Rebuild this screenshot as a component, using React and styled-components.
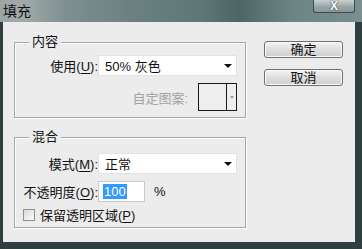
import React from "react";
import styled, { createGlobalStyle } from "styled-components";

const Global = createGlobalStyle`
  html, body { margin: 0; padding: 0; }
  body {
    width: 362px;
    height: 249px;
    overflow: hidden;
    font-family: "Liberation Sans", "Noto Sans CJK SC", sans-serif;
    font-size: 13px;
  }
`;

const Window = styled.div`
  width: 362px;
  height: 249px;
  display: flex;
  flex-direction: column;
  background: #2f3e3e;
`;

const TitleBar = styled.div`
  height: 22px;
  display: flex;
  align-items: flex-start;
  justify-content: space-between;
  background: linear-gradient(
    90deg,
    #9aa4a4 0%,
    #a2abab 6%,
    #7f9090 18%,
    #6c8282 35%,
    #5f7777 55%,
    #4c6565 66%,
    #6a8484 80%,
    #7a8f8f 100%
  );
`;

const Title = styled.span`
  padding: 2px 0 0 3px;
  font-size: 14px;
  color: #111;
  line-height: 18px;
`;

const CloseButton = styled.div`
  width: 42px;
  height: 13px;
  margin-right: 7px;
  box-sizing: border-box;
  border: 1px solid #3c4a4a;
  border-top: none;
  border-radius: 0 0 3px 3px;
  background: linear-gradient(#c9d0d0, #9aa6a6 55%, #8a9797);
  display: flex;
  align-items: center;
  justify-content: center;
  color: #fff;
  font-weight: bold;
  font-size: 12px;
  line-height: 12px;
  text-shadow: 0 0 1px #333, 0 0 1px #333;
`;

const Body = styled.div`
  flex: 1;
  margin: 0 7px 7px 3px;
  background: #ececec;
  display: flex;
  align-items: flex-start;
`;

const Groups = styled.div`
  margin: 20px 0 0 11px;
  width: 232px;
  display: flex;
  flex-direction: column;
  gap: 19px;
`;

const Group = styled.div`
  position: relative;
  box-sizing: border-box;
  height: ${(p) => p.$h}px;
  border: 1px solid #a6a6a6;
  box-shadow: inset 1px 1px 0 #fff, 1px 1px 0 #fff;
  padding: ${(p) => p.$pt}px 8px 0 0;
  display: flex;
  flex-direction: column;
  gap: 7px;
`;

const GroupTitle = styled.span`
  position: absolute;
  top: -9px;
  left: 14px;
  padding: 0 3px;
  background: #ececec;
  color: #111;
  line-height: 16px;
`;

const Row = styled.div`
  display: flex;
  align-items: center;
  justify-content: ${(p) => (p.$end ? "flex-end" : "flex-start")};
`;

const Label = styled.span`
  width: 83px;
  flex: none;
  text-align: right;
  color: #111;
  white-space: nowrap;
`;

const Key = styled.u`
  text-underline-offset: 2px;
`;

const Select = styled.div`
  flex: 1;
  height: 21px;
  box-sizing: border-box;
  background: #fff;
  border: 1px solid #e2e2e2;
  display: flex;
  align-items: center;
  justify-content: space-between;
  padding: 0 4px 0 6px;
  color: #111;
`;

const Arrow = styled.span`
  width: 0;
  height: 0;
  border-left: 4px solid transparent;
  border-right: 4px solid transparent;
  border-top: 4px solid ${(p) => p.$color || "#111"};
`;

const DisabledLabel = styled.span`
  color: #a3a3a3;
  margin-right: 10px;
`;

const PatternBox = styled.div`
  width: 39px;
  height: 28px;
  box-sizing: border-box;
  border: 1px solid #1a1a1a;
  background: #eeeeee;
  display: flex;
`;

const PatternSwatch = styled.div`
  width: 27px;
  border-right: 1px solid #1a1a1a;
`;

const PatternArrow = styled.div`
  flex: 1;
  display: flex;
  align-items: center;
  justify-content: center;
  & > span {
    border-left-width: 2px;
    border-right-width: 2px;
    border-top-width: 3px;
  }
`;

const NumberInput = styled.div`
  width: 47px;
  height: 21px;
  box-sizing: border-box;
  background: #fff;
  border: 1px solid #c3cad4;
  display: flex;
  align-items: center;
  padding-left: 4px;
`;

const Selected = styled.span`
  background: #3399ff;
  color: #fff;
  line-height: 15px;
  padding: 0 1px;
`;

const Unit = styled.span`
  margin-left: 9px;
  color: #111;
`;

const CheckRow = styled.label`
  display: flex;
  align-items: center;
  gap: 5px;
  margin-left: 8px;
  margin-top: -4px;
  color: #111;
`;

const Checkbox = styled.span`
  width: 12px;
  height: 12px;
  box-sizing: border-box;
  border: 1px solid #8e8f8f;
  background: linear-gradient(135deg, #dcdcdc, #f8f8f8);
`;

const Buttons = styled.div`
  margin: 19px 0 0 18px;
  display: flex;
  flex-direction: column;
  gap: 11px;
`;

const Button = styled.button`
  width: 79px;
  height: 17px;
  padding: 0;
  border: 1px solid #707070;
  border-radius: 3px;
  background: linear-gradient(#f4f4f4, #dedede 50%, #cfcfcf);
  box-shadow: inset 0 0 0 1px #fafafa;
  font-family: inherit;
  font-size: 13px;
  line-height: 15px;
  color: #111;
`;

export default function App() {
  return (
    <Window>
      <Global />
      <TitleBar>
        <Title>填充</Title>
        <CloseButton>X</CloseButton>
      </TitleBar>
      <Body>
        <Groups>
          <Group $h={76} $pt={12}>
            <GroupTitle>内容</GroupTitle>
            <Row>
              <Label>
                使用(<Key>U</Key>):
              </Label>
              <Select>
                <span>50% 灰色</span>
                <Arrow />
              </Select>
            </Row>
            <Row $end>
              <DisabledLabel>自定图案:</DisabledLabel>
              <PatternBox>
                <PatternSwatch />
                <PatternArrow>
                  <Arrow $color="#a0a0a0" />
                </PatternArrow>
              </PatternBox>
            </Row>
          </Group>
          <Group $h={91} $pt={15}>
            <GroupTitle>混合</GroupTitle>
            <Row>
              <Label>
                模式(<Key>M</Key>):
              </Label>
              <Select>
                <span>正常</span>
                <Arrow />
              </Select>
            </Row>
            <Row>
              <Label>
                不透明度(<Key>O</Key>):
              </Label>
              <NumberInput>
                <Selected>100</Selected>
              </NumberInput>
              <Unit>%</Unit>
            </Row>
            <CheckRow>
              <Checkbox />
              <span>
                保留透明区域(<Key>P</Key>)
              </span>
            </CheckRow>
          </Group>
        </Groups>
        <Buttons>
          <Button>确定</Button>
          <Button>取消</Button>
        </Buttons>
      </Body>
    </Window>
  );
}
